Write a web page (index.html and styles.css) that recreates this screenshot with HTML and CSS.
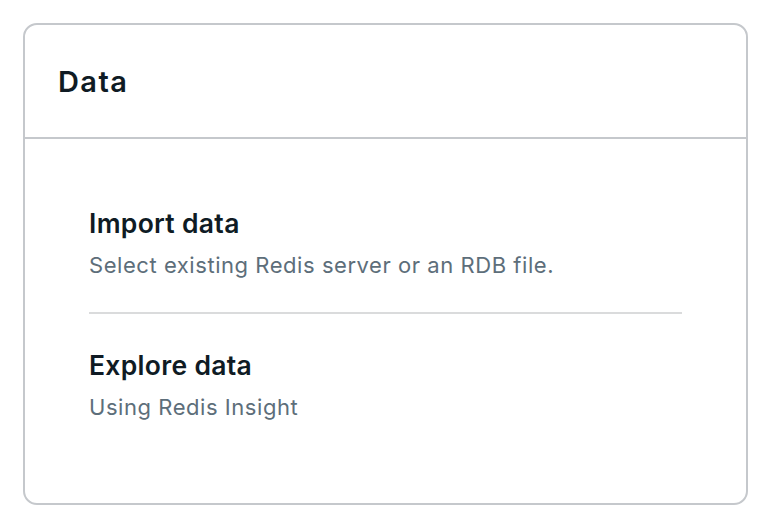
FILE: index.html
```html
<!DOCTYPE html>
<html lang="en">
<head>
    <meta charset="UTF-8">
    <meta name="viewport" content="width=device-width, initial-scale=1.0">
    <title>Data</title>
    <link rel="stylesheet" href="styles.css">
</head>
<body>
    <div class="card">
        <div class="card-header">
            <h2>Data</h2>
        </div>
        <div class="card-body">
            <div class="item">
                <h3>Import data</h3>
                <p>Select existing Redis server or an RDB file.</p>
            </div>
            <div class="item">
                <h3>Explore data</h3>
                <p>Using Redis Insight</p>
            </div>
        </div>
    </div>
</body>
</html>
```

FILE: styles.css
```css
body {
    font-family: Inter, "Noto Sans", sans-serif;
    margin: 0;
    padding: 23px 24px 23px 23px;
    background-color: #fff;
}
.card {
    border: 2px solid #c5c8cc;
    border-radius: 14px;
    height: 478px;
}
.card-header {
    height: 112px;
    display: flex;
    align-items: center;
    padding: 0 33px;
    border-bottom: 2px solid #c5c8cc;
}
h2 {
    margin: 0;
    font-size: 29px;
    font-weight: 600;
    letter-spacing: 1.4px;
    color: #0f1b24;
}
.card-body {
    padding: 36px 64px 0 64px;
}
.item {
    padding: 32px 0 33px;
}
.item + .item {
    border-top: 2px solid #dadbdc;
    padding-top: 35px;
}
h3 {
    margin: 0;
    font-size: 26.5px;
    line-height: 32px;
    font-weight: 600;
    letter-spacing: 0.3px;
    color: #0f1b24;
}
p {
    margin: 12px 0 0;
    font-size: 22px;
    line-height: 28px;
    letter-spacing: 0.55px;
    color: #5d6e7a;
}
```
